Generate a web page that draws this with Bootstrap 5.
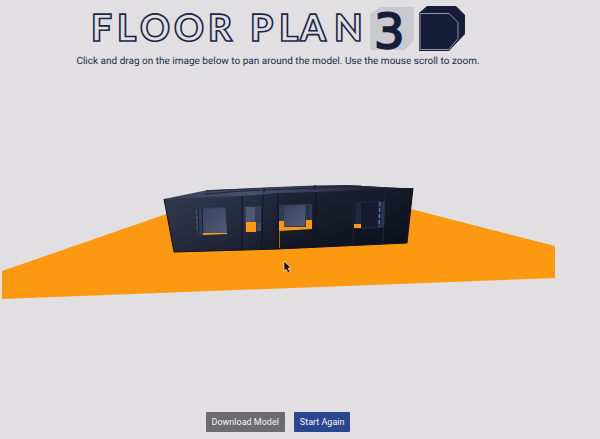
<!DOCTYPE html>
<html lang="en">
<head>
<meta charset="utf-8">
<meta name="viewport" content="width=device-width, initial-scale=1">
<title>Floor Plan 3D</title>
<link href="https://cdn.jsdelivr.net/npm/bootstrap@5.3.0/dist/css/bootstrap.min.css" rel="stylesheet">
<style>
body { background: #e1dfe2; color: #202b49; font-family: Roboto, "Liberation Sans", sans-serif; text-rendering: geometricPrecision; }
.viewer { padding-right: 44px; }
.logo { width: 384px; max-width: 100%; height: auto; overflow: visible; }
.wordmark { font-family: Lato, sans-serif; font-weight: 900; font-size: 37px; fill: none; stroke: #1b2546; stroke-width: 1.6px; }
.numeral { font-family: "DejaVu Sans", sans-serif; font-size: 48px; }
.hint { font-size: 10px; line-height: 18px; }
.scene { width: 100%; height: auto; cursor: grab; }
.actions { gap: 9px; padding-bottom: 7px; }
.action { font-size: 9px; line-height: 14px; padding: 3px 6px; border-radius: 1px; }
.action, .action:hover { color: #f5f5f8; }
.download, .download:hover { background: #6c6b70; }
.restart, .restart:hover { background: #29468f; }
</style>
</head>
<body>
<main class="viewer d-flex flex-column min-vh-100">
  <header class="text-center pt-1">
    <h1 class="m-0 d-flex justify-content-center">
      <svg class="logo d-block" viewBox="86 4 384 49" role="img" aria-label="Floor Plan 3D">
        <text class="wordmark" y="41" x="91 117 140 174 208 250 279 300 334">FLOORPLAN</text>
        <path fill="#c9cacf" d="M370 14l10-7h34v33l-9 10h-35z"/>
        <text class="numeral" x="374" y="48" fill="#151d39" stroke="#151d39" stroke-width="2">3</text>
        <path fill="#151d39" d="M419 13l8-7h29l9 9v19l-16 17h-30z"/>
        <path fill="none" stroke="#8f95aa" d="M420 50V13.500h29l9 9v16l-9 11h-29"/>
      </svg>
    </h1>
    <p class="hint m-0">Click and drag on the image below to pan around the model. Use the mouse scroll to zoom.</p>
  </header>
  <section class="flex-grow-1" aria-label="Model view">
    <svg class="scene d-block" viewBox="0 71 556 329" role="img" aria-label="Model of the floor plan">
      <defs>
        <linearGradient id="wall" x1="164" y1="195" x2="412" y2="230" gradientUnits="userSpaceOnUse">
          <stop offset="0" stop-color="#30374b"/><stop offset=".35" stop-color="#242a3c"/><stop offset=".5" stop-color="#171b29"/><stop offset="1" stop-color="#090d19"/>
        </linearGradient>
        <linearGradient id="shade" x1="0" y1="190" x2="0" y2="252" gradientUnits="userSpaceOnUse">
          <stop offset="0" stop-color="#3c4764" stop-opacity=".2"/><stop offset="1" stop-color="#080b15" stop-opacity=".3"/>
        </linearGradient>
        <linearGradient id="room" x1="0" y1="0" x2="1" y2="1">
          <stop offset="0" stop-color="#3a435e"/><stop offset="1" stop-color="#505a77"/>
        </linearGradient>
        <linearGradient id="roof" x1="0" y1="0" x2="1" y2="0">
          <stop offset="0" stop-color="#353e58"/><stop offset=".35" stop-color="#48526e"/><stop offset=".65" stop-color="#303850"/><stop offset="1" stop-color="#0c101d"/>
        </linearGradient>
      </defs>
      <path fill="#fd9910" d="M2 271l170-59 235-4 148 38v32L2 299z"/>
      <path fill="url(#roof)" d="M164 199l44-9 57-2 50-2 30-1 68 4v5l-249 9z"/>
      <path fill="none" stroke="#20283d" d="M206 191l59-3 50-2 38 0 59 3"/>
      <path fill="url(#wall)" d="M164 199l78-3 36-3 38-1 97-4-6 55-129 6-104 3z"/>
      <path fill="url(#shade)" d="M164 199l78-3 36-3 38-1 97-4-6 55-129 6-104 3z"/>
      <path fill="none" stroke="#10131f" d="M164 199l10 53 104-3 129-6 6-55M242 196v54M263 195l-1 54M278 193v56M316 192l-1 55M264 188v5M315 185v5"/>
      <path fill="none" stroke="#1c2336" d="M354 191l-1 54M385 190l-2 53M205 194l37-3 73-3 46-2"/>
      <path fill="#343d58" d="M195 208l31-1 1 27-30 1z"/>
      <path fill="url(#room)" d="M202 209l23-1 2 25-24 1z"/>
      <path fill="none" stroke="#171d2e" d="M202 208l1 25M198 208l1 26"/>
      <path fill="none" stroke="#a8762f" d="M197 212v20" stroke-dasharray="1 4"/>
      <path fill="#fd9910" d="M203 233h24v1l-24 1z"/>
      <path fill="#343d58" d="M244 207l17-1v25l-16 1z"/>
      <path fill="#505974" d="M246 207h9v15h-9z"/>
      <path fill="#fd9910" d="M246 222h10v10h-10z"/>
      <path fill="#434c66" d="M257 223h4v8h-4z"/>
      <path fill="#303a55" d="M279 205l33-1v25l-33 1z"/>
      <path fill="url(#room)" d="M284 206l21-1v21h-21z"/>
      <path fill="none" stroke="#182034" d="M308 206v14"/>
      <path fill="#fd9910" d="M279 221h5v6h22v-7h6v9l-33 2z"/>
      <path fill="none" stroke="#a46a25" d="M279.500 231v17"/>
      <path fill="#202942" d="M356 202l29-1-1 27-29 1z"/>
      <path fill="#151b2d" d="M361 203l17-1-1 25-16 1z"/>
      <path fill="#283453" d="M382 202h3l-1 25h-3z"/>
      <path fill="none" stroke="#7984a2" stroke-dasharray="4 2" d="M380 202l-1 25"/>
      <path fill="#fd9910" d="M354 224h7v4h-7z"/>
      <path fill="#111" stroke="#f3dfc3" stroke-width=".7" d="M284 261v10l2-2 2 4 2-1-2-4h3z"/>
    </svg>
  </section>
  <footer class="actions d-flex justify-content-center">
    <button type="button" class="btn border-0 action download">Download Model</button>
    <button type="button" class="btn border-0 action restart">Start Again</button>
  </footer>
</main>
<script src="https://cdn.jsdelivr.net/npm/bootstrap@5.3.0/dist/js/bootstrap.bundle.min.js"></script>
</body>
</html>
